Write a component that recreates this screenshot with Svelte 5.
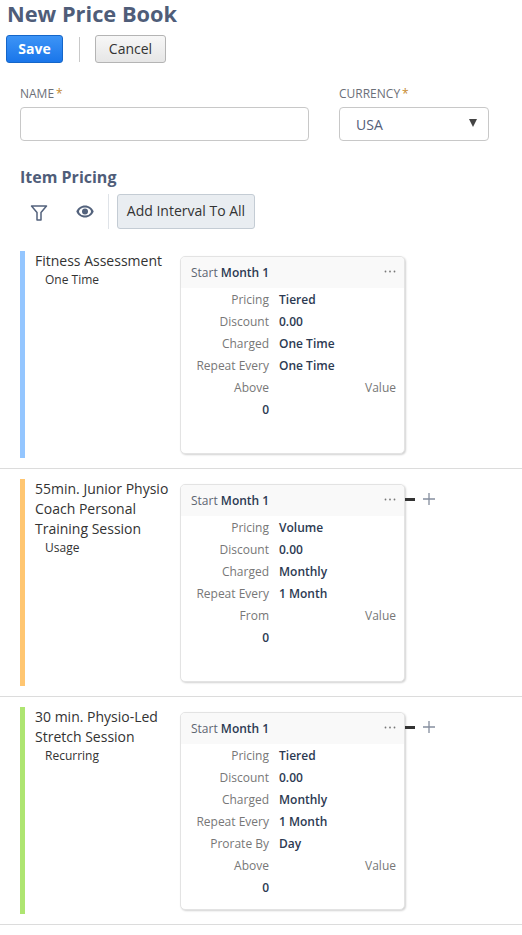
<script>
  const items = [
    {
      name: 'Fitness Assessment',
      type: 'One Time',
      color: '#94c6ff',
      addable: false,
      rows: [['Pricing', 'Tiered'], ['Discount', '0.00'], ['Charged', 'One Time'], ['Repeat Every', 'One Time']],
      tier: 'Above'
    },
    {
      name: '55min. Junior Physio Coach Personal Training Session',
      type: 'Usage',
      color: '#ffc671',
      addable: true,
      rows: [['Pricing', 'Volume'], ['Discount', '0.00'], ['Charged', 'Monthly'], ['Repeat Every', '1 Month']],
      tier: 'From'
    },
    {
      name: '30 min. Physio-Led Stretch Session',
      type: 'Recurring',
      color: '#aee571',
      addable: true,
      rows: [['Pricing', 'Tiered'], ['Discount', '0.00'], ['Charged', 'Monthly'], ['Repeat Every', '1 Month'], ['Prorate By', 'Day']],
      tier: 'Above'
    }
  ]
</script>

<div class="page">
  <h1>New Price Book</h1>
  <div class="actions">
    <button class="btn primary">Save</button>
    <span class="sep"></span>
    <button class="btn">Cancel</button>
  </div>

  <div class="fields">
    <div class="field name">
      <label for="name">NAME<span class="req">*</span></label>
      <input id="name" type="text" />
    </div>
    <div class="field currency">
      <label for="currency">CURRENCY<span class="req">*</span></label>
      <div class="select" id="currency">
        <span>USA</span>
        <span class="arrow"></span>
      </div>
    </div>
  </div>

  <h2>Item Pricing</h2>
  <div class="toolbar">
    <svg class="filter" width="18" height="16" viewBox="0 0 18 16" fill="none" stroke="#53627c" stroke-width="1.5" stroke-linejoin="round">
      <path d="M1.500 1h15l-5.500 6.500V15H7V7.500z" />
    </svg>
    <svg class="eye" width="18" height="13" viewBox="0 0 18 13">
      <path d="M9 .5C5 .5 1.8 3 .3 6.500 1.800 10 5 12.500 9 12.500s7.200-2.500 8.700-6C16.200 3 13 .5 9 .5z" fill="#53627c" />
      <ellipse cx="9" cy="6.500" rx="6" ry="4" fill="#fff" />
      <circle cx="9" cy="6.500" r="3" fill="#53627c" />
    </svg>
    <span class="tool-sep"></span>
    <button class="btn add">Add Interval To All</button>
  </div>

  {#each items as item}
    <div class="item">
      <div class="bar" style={`background: ${item.color}`}></div>
      <div class="info">
        <div class="item-name">{item.name}</div>
        <div class="item-type">{item.type}</div>
      </div>
      <div class="card">
        <div class="card-head">
          <span>Start <b>Month 1</b></span>
          <svg class="dots" width="12" height="3" viewBox="0 0 12 3" fill="#777">
            <circle cx="1.500" cy="1.500" r="0.900" />
            <circle cx="6" cy="1.500" r="0.900" />
            <circle cx="10.500" cy="1.500" r="0.900" />
          </svg>
        </div>
        <div class="card-body">
          {#each item.rows as row}
            <div class="row">
              <span class="key">{row[0]}</span>
              <span class="val">{row[1]}</span>
            </div>
          {/each}
          <div class="row">
            <span class="key">{item.tier}</span>
            <span class="value-head">Value</span>
          </div>
          <div class="row">
            <span class="key zero">0</span>
          </div>
        </div>
      </div>
      {#if item.addable}
        <div class="adder">
          <span class="link"></span>
          <svg width="12" height="12" viewBox="0 0 12 12" stroke="#858e9e" stroke-width="1.300">
            <path d="M6 0v12M0 6h12" />
          </svg>
        </div>
      {/if}
    </div>
  {/each}
</div>

<style>
  :global(body) {
    margin: 0;
    background: #fff;
  }

  .page {
    width: 522px;
    font-family: 'Open Sans', sans-serif;
    color: #16325c;
  }

  h1 {
    margin: 0;
    padding: 0 0 0 7px;
    font-size: 21.800px;
    line-height: 28px;
    font-weight: 700;
    color: #4f5d79;
  }

  .actions {
    display: flex;
    align-items: center;
    padding: 7px 0 0 6px;
  }

  .btn {
    font-family: inherit;
    font-size: 14px;
    height: 28px;
    padding: 0 0 2px;
    border: 1px solid #b4b4b4;
    border-radius: 3px;
    color: #333;
    background: linear-gradient(#f7f7f7, #e6e6e6);
  }

  .primary {
    width: 57px;
    font-weight: 700;
    color: #fff;
    border-color: #1566c9;
    background: linear-gradient(#3d94f6, #1a76ea);
  }

  .actions .btn:not(.primary) {
    width: 71px;
  }

  .sep {
    width: 1px;
    height: 25px;
    margin: 0 15px 0 16px;
    background: #c9c9c9;
  }

  .fields {
    display: flex;
    padding: 23px 0 0 20px;
  }

  .field label {
    display: block;
    font-size: 12px;
    line-height: 16px;
    color: #6b6f78;
    margin-bottom: 5px;
  }

  .req {
    color: #c68a2e;
    margin-left: 2px;
  }

  .name {
    width: 319px;
  }

  input,
  .select {
    box-sizing: border-box;
    height: 34px;
    border: 1px solid #c8c8c8;
    border-radius: 4px;
    background: #fff;
  }

  input {
    width: 289px;
    display: block;
  }

  .select {
    width: 150px;
    display: flex;
    align-items: center;
    justify-content: space-between;
    padding: 0 11px 0 16px;
    font-size: 14px;
    color: #54607a;
  }

  .arrow {
    width: 0;
    height: 0;
    margin-top: -3px;
    border-left: 4px solid transparent;
    border-right: 4px solid transparent;
    border-top: 8px solid #444;
  }

  h2 {
    margin: 0;
    padding: 25px 0 0 20px;
    font-size: 16px;
    line-height: 22px;
    font-weight: 700;
    color: #4f5d79;
  }

  .toolbar {
    display: flex;
    align-items: center;
    height: 35px;
    padding: 6px 0 0 30px;
    margin-bottom: 22px;
  }

  .filter {
    margin-top: 2px;
  }

  .eye {
    margin-left: 28px;
  }

  .tool-sep {
    width: 1px;
    height: 35px;
    margin: 0 8px 0 14px;
    background: #dfe3e8;
  }

  .add {
    width: 138px;
    height: 35px;
    color: #333;
    border-color: #c4ccd4;
    background: #e9edf1;
  }

  .item {
    position: relative;
    display: flex;
    height: 207px;
    padding: 0 0 10px 20px;
    margin-bottom: 10px;
    border-bottom: 1px solid #dcdcdc;
  }

  .bar {
    flex: none;
    width: 5px;
    height: 207px;
  }

  .info {
    flex: none;
    width: 145px;
    padding: 0 0 0 10px;
    color: #333;
  }

  .item-name {
    font-size: 14px;
    line-height: 20px;
    width: 140px;
  }

  .item-type {
    font-size: 12px;
    line-height: 18px;
    padding-left: 10px;
  }

  .card {
    box-sizing: border-box;
    flex: none;
    width: 225px;
    height: 198px;
    margin-top: 5px;
    border: 1px solid #e3e3e3;
    border-radius: 5px;
    box-shadow: 1px 1px 2px rgba(0, 0, 0, 0.18);
    overflow: hidden;
    background: #fff;
  }

  .card-head {
    display: flex;
    justify-content: space-between;
    height: 31px;
    padding: 0 8px 0 10px;
    font-size: 12px;
    line-height: 31px;
    color: #5f6673;
    background: #f9f9f9;
  }

  .card-head b {
    font-weight: 600;
    color: #2c3a52;
  }

  .dots {
    margin-top: 13px;
  }

  .card-body {
    padding-top: 1px;
  }

  .row {
    display: flex;
    height: 22px;
    font-size: 12px;
    line-height: 22px;
  }

  .key {
    flex: none;
    width: 88px;
    text-align: right;
    color: #777;
  }

  .zero {
    font-weight: 600;
    color: #2c3a52;
  }

  .val {
    margin-left: 10px;
    font-weight: 600;
    color: #2c3a52;
  }

  .value-head {
    flex: 1;
    padding-right: 8px;
    text-align: right;
    color: #777;
  }

  .adder {
    position: absolute;
    left: 405px;
    top: 14px;
    display: flex;
    align-items: center;
  }

  .link {
    width: 10px;
    height: 3px;
    margin-right: 8px;
    background: #333;
  }
</style>
